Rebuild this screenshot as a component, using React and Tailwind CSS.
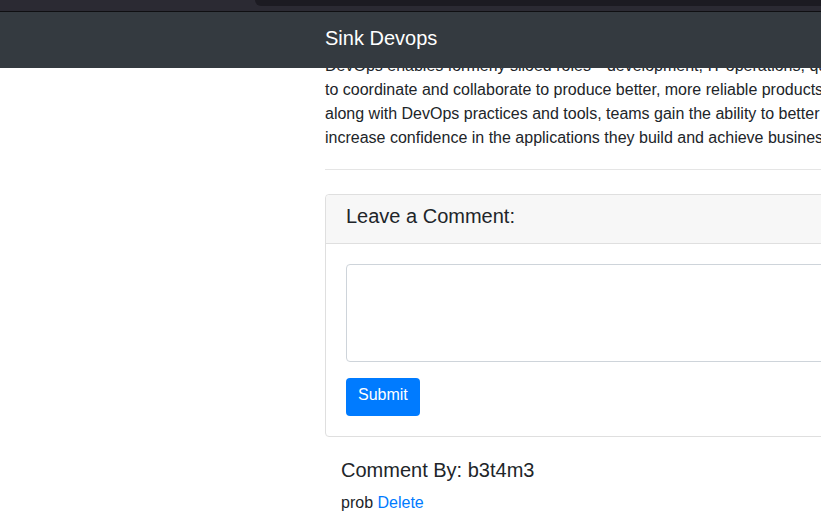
import React from 'react';

const lines = [
  'DevOps enables formerly siloed roles\u2014development, IT operations, quality engineering, and security\u2014',
  'to coordinate and collaborate to produce better, more reliable products. By adopting a DevOps culture',
  'along with DevOps practices and tools, teams gain the ability to better respond to customer needs,',
  'increase confidence in the applications they build and achieve business goals faster.',
];

export default function App() {
  return (
    <div className="w-[821px] h-[531px] overflow-hidden bg-white text-[#212529] font-['Liberation_Sans',Arial,sans-serif]">
      {/* browser strip */}
      <div className="h-[11px] bg-[#2b2a33] flex">
        <div className="w-[255px]" />
        <div className="flex-1 h-[6px] bg-[#1c1b22] rounded-bl-[6px]" />
      </div>
      <div className="h-px bg-[#0f0f12]" />

      <div className="relative">
        {/* fixed navbar */}
        <nav className="absolute top-0 left-0 right-0 h-[56px] bg-[#343a40] z-10 flex items-start pt-[11px] pl-[325px]">
          <span className="text-white text-[20px] leading-[30px]">Sink Devops</span>
        </nav>

        <div className="flex pt-[42px]">
          <div className="w-[325px] shrink-0" />
          <div className="w-[700px] shrink-0">
            <p className="text-[16px] leading-[24px] whitespace-nowrap">
              {lines.map((l) => (
                <span key={l} className="block">{l}</span>
              ))}
            </p>
            <hr className="mt-[19px] border-0 border-t border-[#e5e5e5]" />

            <div className="mt-[24px] border border-[#dfdfdf] rounded-[4px]">
              <div className="bg-[#f7f7f7] border-b border-[#dfdfdf] px-[20px] pt-[9px] pb-[15px] rounded-t-[4px]">
                <h5 className="text-[20px] leading-[24px]">Leave a Comment:</h5>
              </div>
              <div className="p-[20px]">
                <textarea className="block w-full h-[98px] border border-[#ced4da] rounded-[4px] resize-none outline-none" />
                <button className="mt-[16px] bg-[#007bff] text-white text-[16px] leading-[24px] px-[12px] pt-[5px] pb-[9px] rounded-[4px]">
                  Submit
                </button>
              </div>
            </div>

            <div className="pl-[16px] mt-[21px]">
              <h5 className="text-[20px] leading-[24px] mb-[9px]">Comment By: b3t4m3</h5>
              <p className="text-[16px] leading-[24px]">
                prob <a className="text-[#007bff]">Delete</a>
              </p>
            </div>
          </div>
        </div>
      </div>
    </div>
  );
}
